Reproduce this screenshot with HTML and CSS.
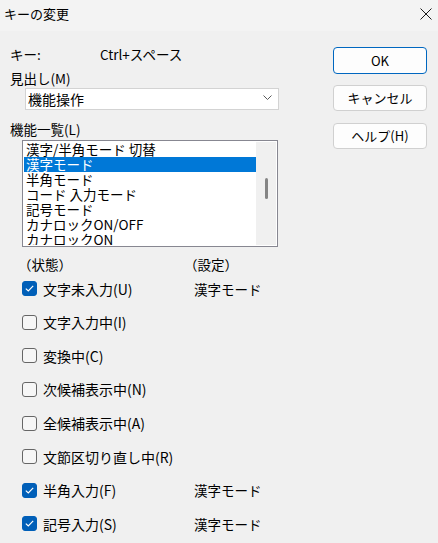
FILE: index.html
```html
<!DOCTYPE html>
<html lang="ja">
<head>
<meta charset="utf-8">
<title>キーの変更</title>
<link rel="stylesheet" href="styles.css">
</head>
<body>
<div class="window">
  <div class="titlebar">
    <span class="title">キーの変更</span>
    <svg class="close" width="12" height="12" viewBox="0 0 12 12"><path d="M0.5 0.5 L11.5 11.5 M11.5 0.5 L0.5 11.5" stroke="#1a1a1a" stroke-width="1" fill="none"/></svg>
  </div>
  <div class="body">
    <div class="left">
      <div class="keyrow"><span class="keylabel">キー:</span><span>Ctrl+スペース</span></div>
      <div class="label label-m">見出し(M)</div>
      <div class="combo">
        <span>機能操作</span>
        <svg class="chev" width="9" height="5" viewBox="0 0 9 5"><path d="M0.5 0.5 L4.5 4.5 L8.5 0.5" stroke="#5a5a5a" stroke-width="1" fill="none"/></svg>
      </div>
      <div class="label label-l">機能一覧(L)</div>
      <div class="listbox">
        <ul class="items">
          <li>漢字/半角モード 切替</li>
          <li class="sel">漢字モード</li>
          <li>半角モード</li>
          <li>コード 入力モード</li>
          <li>記号モード</li>
          <li>カナロックON/OFF</li>
          <li>カナロックON</li>
        </ul>
        <div class="scroll"><div class="thumb"></div></div>
      </div>
      <div class="headrow"><span class="col1">（状態）</span><span class="col2">（設定）</span></div>
      <div class="checks">
        <div class="row"><span class="cb on"><svg width="9" height="7" viewBox="0 0 9 7"><path d="M0.8 3.6 L3.3 6 L8.2 0.9" stroke="#fff" stroke-width="1.2" fill="none"/></svg></span><span class="text">文字未入力(U)</span><span class="set">漢字モード</span></div>
        <div class="row"><span class="cb"></span><span class="text">文字入力中(I)</span></div>
        <div class="row"><span class="cb"></span><span class="text">変換中(C)</span></div>
        <div class="row"><span class="cb"></span><span class="text">次候補表示中(N)</span></div>
        <div class="row"><span class="cb"></span><span class="text">全候補表示中(A)</span></div>
        <div class="row"><span class="cb"></span><span class="text">文節区切り直し中(R)</span></div>
        <div class="row"><span class="cb on"><svg width="9" height="7" viewBox="0 0 9 7"><path d="M0.8 3.6 L3.3 6 L8.2 0.9" stroke="#fff" stroke-width="1.2" fill="none"/></svg></span><span class="text">半角入力(F)</span><span class="set">漢字モード</span></div>
        <div class="row"><span class="cb on"><svg width="9" height="7" viewBox="0 0 9 7"><path d="M0.8 3.6 L3.3 6 L8.2 0.9" stroke="#fff" stroke-width="1.2" fill="none"/></svg></span><span class="text">記号入力(S)</span><span class="set">漢字モード</span></div>
      </div>
    </div>
    <div class="buttons">
      <button class="btn default">OK</button>
      <button class="btn">キャンセル</button>
      <button class="btn">ヘルプ(H)</button>
    </div>
  </div>
</div>
</body>
</html>
```
FILE: styles.css
```css
html, body {
  margin: 0;
  padding: 0;
}
body {
  width: 438px;
  height: 543px;
  overflow: hidden;
  background: #f0f0f0;
  font-family: "Noto Sans CJK JP", "Noto Sans", sans-serif;
  font-size: 13px;
  color: #000;
}
.window {
  width: 438px;
  height: 543px;
  display: flex;
  flex-direction: column;
}
.titlebar {
  height: 31px;
  flex: none;
  background: #f3f3f3;
  display: flex;
  align-items: center;
  justify-content: space-between;
  padding: 0 6px 4px 4px;
  box-sizing: border-box;
}
.title {
  font-size: 13px;
  line-height: 16px;
}
.close {
  display: block;
  margin-top: 1px;
}
.body {
  display: flex;
  padding-left: 10px;
}
.left {
  width: 270px;
  display: flex;
  flex-direction: column;
}
.keyrow {
  margin-top: 15px;
  height: 16px;
  line-height: 16px;
  display: flex;
  font-size: 13.5px;
}
.keylabel {
  width: 90px;
}
.label {
  height: 16px;
  line-height: 16px;
  font-size: 13.5px;
}
.label-m {
  margin-top: 8px;
}
.combo {
  margin-top: 2px;
  margin-left: 15px;
  width: 254px;
  height: 22px;
  box-sizing: border-box;
  border: 1px solid #d3d3d3;
  background: #fff;
  display: flex;
  align-items: center;
  justify-content: space-between;
  padding: 0 6px 0 2px;
  font-size: 14px;
  line-height: 18px;
}
.chev {
  display: block;
  margin-top: -3px;
}
.label-l {
  margin-top: 11px;
}
.listbox {
  margin-top: 3px;
  margin-left: 12px;
  width: 256px;
  height: 107px;
  box-sizing: border-box;
  border: 1px solid #878791;
  background: #fff;
  display: flex;
  padding: 1px;
}
.items {
  list-style: none;
  margin: 0;
  padding: 0;
  flex: 1;
  overflow: hidden;
}
.items li {
  height: 15px;
  line-height: 15px;
  padding-left: 2px;
  font-size: 13.5px;
  white-space: nowrap;
}
.items li.sel {
  background: #0078d7;
  color: #fff;
}
.scroll {
  width: 20px;
  background: #f0f0f0;
  display: flex;
  justify-content: center;
  padding-top: 36px;
  box-sizing: border-box;
}
.thumb {
  width: 3px;
  height: 21px;
  border-radius: 1.5px;
  background: #858585;
}
.headrow {
  margin-top: 9px;
  height: 16px;
  line-height: 16px;
  display: flex;
  padding-left: 8px;
  font-size: 13.5px;
}
.col1 {
  width: 166px;
}
.checks {
  display: flex;
  flex-direction: column;
}
.row {
  height: 33.57px;
  display: flex;
  align-items: center;
  padding-left: 12px;
  font-size: 14px;
}
.cb {
  width: 15px;
  height: 15px;
  box-sizing: border-box;
  border: 1px solid #666;
  border-radius: 3px;
  background: #f6f6f6;
  display: flex;
  align-items: center;
  justify-content: center;
  flex: none;
}
.cb.on {
  background: #005fb8;
  border-color: #005fb8;
}
.cb svg {
  display: block;
}
.text {
  margin-left: 6px;
  width: 151px;
  white-space: nowrap;
}
.set {
  font-size: 13.5px;
  white-space: nowrap;
}
.buttons {
  margin-left: 53px;
  padding-top: 16px;
  display: flex;
  flex-direction: column;
  gap: 12px;
}
.btn {
  width: 94px;
  height: 26px;
  box-sizing: border-box;
  border: 1px solid #d0d0d0;
  border-radius: 4px;
  background: #fdfdfd;
  font-family: "Noto Sans CJK JP", "Noto Sans", sans-serif;
  font-size: 13px;
  color: #000;
  padding: 0;
  line-height: 16px;
}
.btn.default {
  border-color: #0067c0;
  height: 27px;
  margin-bottom: -1px;
}
```
